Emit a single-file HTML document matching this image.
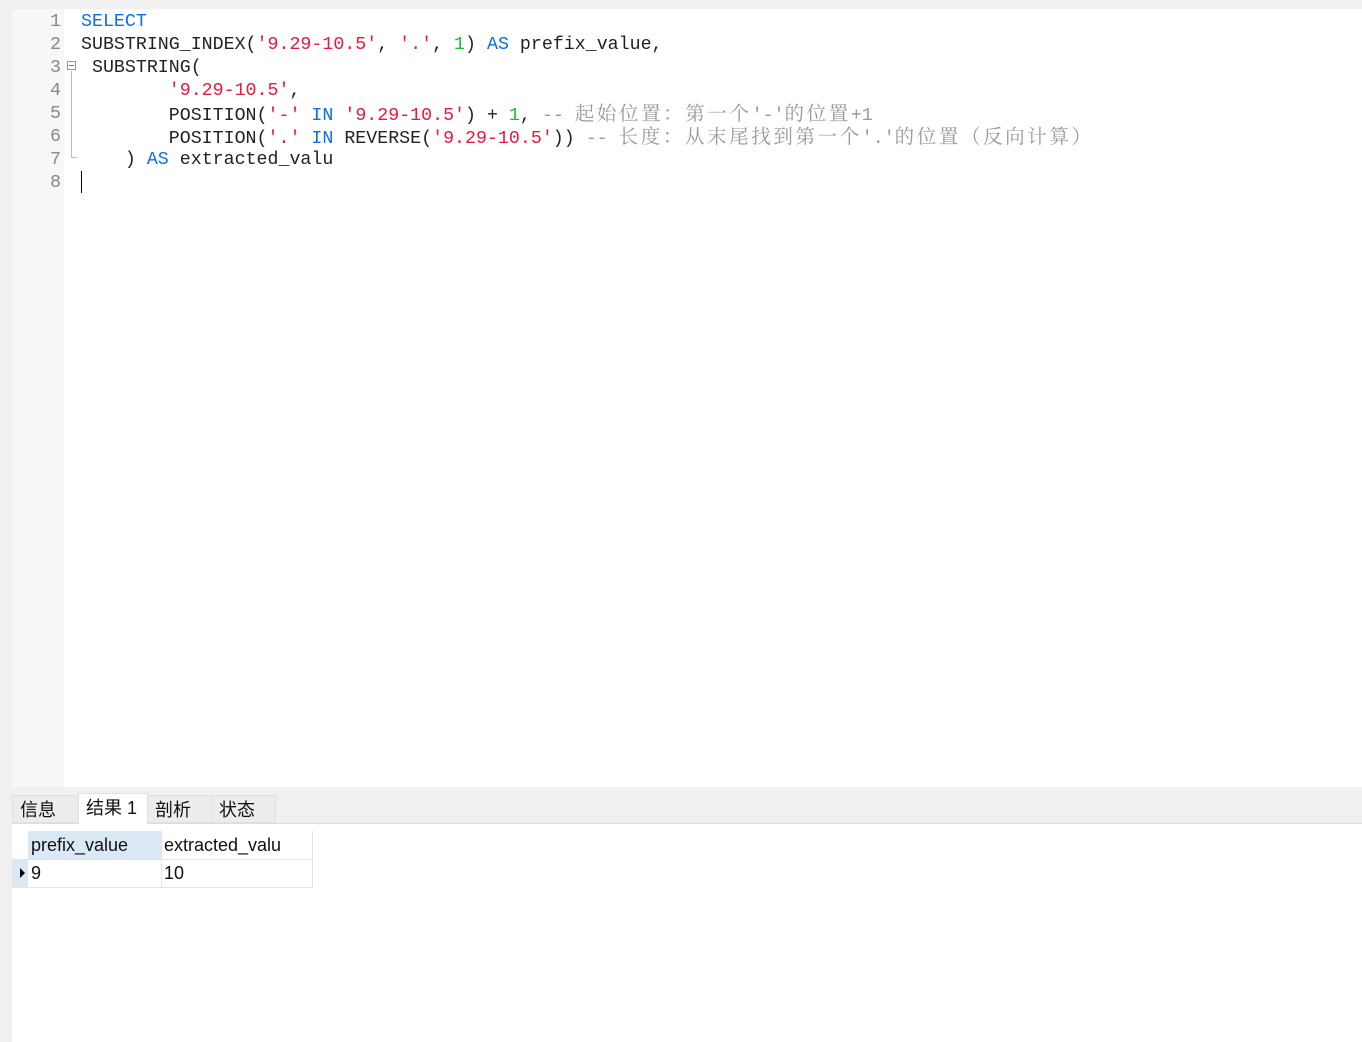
<!DOCTYPE html>
<html><head><meta charset="utf-8"><style>
body{margin:0;width:1362px;height:1041px;background:#f0f0f0;position:relative;overflow:hidden;font-family:"Liberation Sans","Noto Sans CJK SC",sans-serif}
.ed{position:absolute;left:12px;top:9px;width:1350px;height:778px;background:#fff}
.gut{position:absolute;left:12px;top:9px;width:52px;height:778px;background:#f7f7f7}
.ln{position:absolute;left:40px;width:21px;text-align:right;color:#888;font:18.3px/23px "Liberation Mono",monospace;margin-top:2px}
.code{position:absolute;left:81px;white-space:pre;font:18.3px/23px "Liberation Mono",monospace;color:#222;height:23px;margin-top:2px}
.k{color:#0a6fe8}.s{color:#e8193b}.n{color:#1fb83a}.c{color:#999}
.z{font-family:"Noto Serif CJK SC",serif;font-size:19.5px;letter-spacing:2.6px;line-height:18px}
.res{position:absolute;left:12px;top:823px;width:1350px;height:218px;background:#fff;border-top:1px solid #ddd}
.tab{position:absolute;top:795px;height:28px;line-height:28px;font-size:18px;color:#111;background:#ececec;border:1px solid #e0e0e0;box-sizing:border-box;padding-left:7px}
.cell{position:absolute;font-size:18px;line-height:28px;color:#111;padding-left:3px;box-sizing:border-box;border-right:1px solid #e4e4e4;border-bottom:1px solid #e4e4e4}
</style></head><body>
<div class="ed"></div><div class="gut"></div>
<div class="ln" style="top:9px">1</div>
<div class="ln" style="top:32px">2</div>
<div class="ln" style="top:55px">3</div>
<div class="ln" style="top:78px">4</div>
<div class="ln" style="top:101px">5</div>
<div class="ln" style="top:124px">6</div>
<div class="ln" style="top:147px">7</div>
<div class="ln" style="top:170px">8</div>
<div style="position:absolute;left:67px;top:61px;width:9px;height:9px;border:1px solid #999;box-sizing:border-box;background:#fff"></div>
<div style="position:absolute;left:69px;top:65px;width:5px;height:1px;background:#777"></div>
<div style="position:absolute;left:71px;top:71px;width:1px;height:86px;background:#bbb"></div>
<div style="position:absolute;left:71px;top:157px;width:6px;height:1px;background:#bbb"></div>
<div class="code" style="top:9px"><span class="k">SELECT</span></div>
<div class="code" style="top:32px">SUBSTRING_INDEX(<span class="s">'9.29-10.5'</span>, <span class="s">'.'</span>, <span class="n">1</span>) <span class="k">AS</span> prefix_value,</div>
<div class="code" style="top:55px"> SUBSTRING(</div>
<div class="code" style="top:78px">        <span class="s">'9.29-10.5'</span>,</div>
<div class="code" style="top:101px">        POSITION(<span class="s">'-'</span> <span class="k">IN</span> <span class="s">'9.29-10.5'</span>) + <span class="n">1</span>, <span class="c">-- <span class="z">起始位置：第一个</span>'-'<span class="z">的位置</span>+1</span></div>
<div class="code" style="top:124px">        POSITION(<span class="s">'.'</span> <span class="k">IN</span> REVERSE(<span class="s">'9.29-10.5'</span>)) <span class="c">-- <span class="z">长度：从末尾找到第一个</span>'.'<span class="z">的位置（反向计算）</span></span></div>
<div class="code" style="top:147px">    ) <span class="k">AS</span> extracted_valu</div>
<div style="position:absolute;left:81px;top:171px;width:1px;height:22px;background:#000"></div>
<div class="res"></div>
<div class="tab" style="left:12px;width:67px">信息</div>
<div class="tab" style="left:78px;width:70px;background:#fff;top:793px;height:31px;border-bottom:none">结果 1</div>
<div class="tab" style="left:147px;width:65px">剖析</div>
<div class="tab" style="left:211px;width:65px">状态</div>
<div class="cell" style="left:28px;top:831px;width:134px;background:#dbe9f7">prefix_value</div>
<div class="cell" style="left:161px;top:831px;width:152px">extracted_valu</div>
<div style="position:absolute;left:12px;top:859px;width:16px;height:29px;background:#dbe9f7"></div>
<div style="position:absolute;left:20px;top:868px;width:0;height:0;border-top:5px solid transparent;border-bottom:5px solid transparent;border-left:5px solid #000"></div>
<div class="cell" style="left:28px;top:859px;width:134px">9</div>
<div class="cell" style="left:161px;top:859px;width:152px">10</div>
</body></html>
